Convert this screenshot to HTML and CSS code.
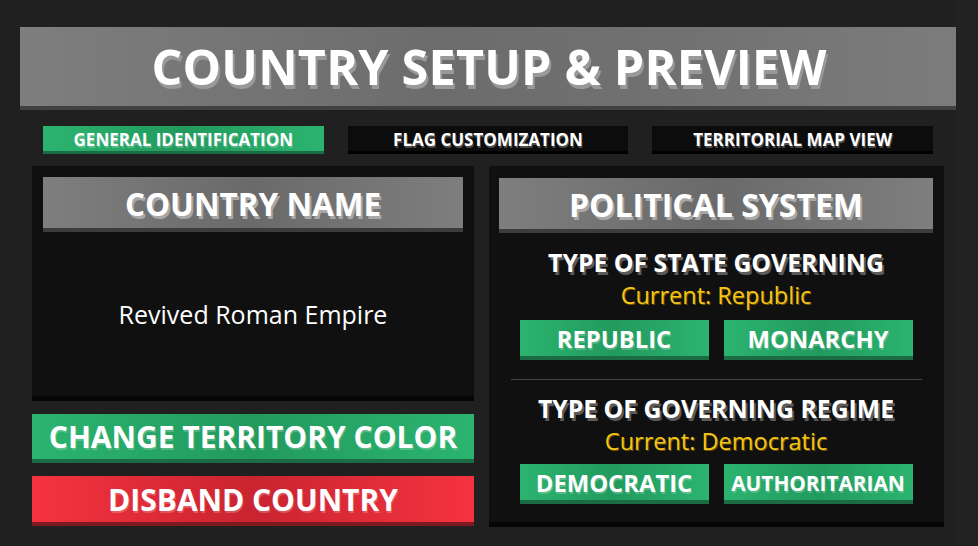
FILE: index.html
```html
<!DOCTYPE html>
<html lang="en">
<head>
<meta charset="utf-8">
<title>Country Setup &amp; Preview</title>
<link rel="stylesheet" href="styles.css">
</head>
<body>
<div class="app">
  <header class="title-bar"><h1>COUNTRY SETUP &amp; PREVIEW</h1></header>
  <nav class="tabs">
    <div class="tab tab-active">GENERAL IDENTIFICATION</div>
    <div class="tab">FLAG CUSTOMIZATION</div>
    <div class="tab">TERRITORIAL MAP VIEW</div>
  </nav>
  <main class="content">
    <div class="left-col">
      <section class="panel name-panel">
        <div class="panel-header">COUNTRY NAME</div>
        <div class="name-value">Revived Roman Empire</div>
      </section>
      <button class="btn btn-green btn-wide">CHANGE TERRITORY COLOR</button>
      <button class="btn btn-red btn-wide btn-tall">DISBAND COUNTRY</button>
    </div>
    <section class="panel political">
      <div class="panel-header">POLITICAL SYSTEM</div>
      <div class="group">
        <h2 class="group-title">TYPE OF STATE GOVERNING</h2>
        <div class="current">Current: Republic</div>
        <div class="choices">
          <button class="btn btn-green btn-choice">REPUBLIC</button>
          <button class="btn btn-green btn-choice">MONARCHY</button>
        </div>
      </div>
      <hr class="divider">
      <div class="group group-second">
        <h2 class="group-title">TYPE OF GOVERNING REGIME</h2>
        <div class="current">Current: Democratic</div>
        <div class="choices">
          <button class="btn btn-green btn-choice">DEMOCRATIC</button>
          <button class="btn btn-green btn-choice btn-small">AUTHORITARIAN</button>
        </div>
      </div>
    </section>
  </main>
</div>
</body>
</html>
```

FILE: styles.css
```css
* { box-sizing: border-box; }
html, body { margin: 0; padding: 0; }
body {
  background: #222222;
  font-family: "Open Sans", "Liberation Sans", sans-serif;
  color: #ffffff;
  width: 978px;
  height: 546px;
  overflow: hidden;
}
.app {
  width: 956px;
  height: 546px;
  background: #202020;
  padding: 27px 0 0 20px;
}
.title-bar {
  width: 936px;
  height: 83px;
  background: linear-gradient(90deg, #7e7e7e 0%, #6c6c6c 45%, #717171 70%, #7c7c7c 100%);
  border-bottom: 4px solid #414141;
  display: flex;
  align-items: center;
  justify-content: center;
}
.title-bar h1 {
  margin: 0;
  font-size: 48.5px;
  font-weight: 700;
  line-height: 1;
  letter-spacing: 0.2px;
  text-shadow: 2px 4px 0 #999999;
  padding-left: 2px;
}
.tabs {
  width: 936px;
  margin-top: 16px;
  padding: 0 23px;
  display: grid;
  grid-template-columns: 1fr 1fr 1fr;
  gap: 24px;
}
.tab {
  height: 28px;
  background: #0c0c0c;
  border-bottom: 3px solid #000000;
  display: flex;
  align-items: center;
  justify-content: center;
  font-size: 17px;
  font-weight: 700;
  text-shadow: 1px 2px 0 #4a4a4a;
  padding-top: 1px;
}
.tab-active {
  background: linear-gradient(90deg, #2bb46f 0%, #229a5e 50%, #2bb46f 100%);
  border-bottom-color: #1b6c45;
  text-shadow: 1px 2px 0 rgba(255,255,255,0.22);
}
.content {
  width: 936px;
  margin-top: 12px;
  padding: 0 12px;
  display: grid;
  grid-template-columns: 442px 455px;
  gap: 15px;
}
.left-col {
  display: flex;
  flex-direction: column;
  gap: 13px;
}
.panel {
  background: #101010;
  border-bottom: 5px solid #050505;
}
.name-panel {
  height: 235px;
  padding: 11px 11px 0;
  display: flex;
  flex-direction: column;
}
.panel-header {
  height: 55px;
  background: linear-gradient(90deg, #7e7e7e 0%, #6a6a6a 50%, #7e7e7e 100%);
  border-bottom: 4px solid #3c3c3c;
  display: flex;
  align-items: center;
  justify-content: center;
  font-size: 31.5px;
  font-weight: 700;
  text-shadow: 2px 3px 0 #a8a8a8;
  padding-top: 2px;
}
.name-value {
  flex: 1;
  display: flex;
  align-items: center;
  justify-content: center;
  font-size: 25px;
}
.btn {
  border: none;
  margin: 0;
  padding: 0;
  font-family: "Open Sans", "Liberation Sans", sans-serif;
  font-weight: 700;
  color: #ffffff;
  display: flex;
  align-items: center;
  justify-content: center;
}
.btn-green {
  background: linear-gradient(90deg, #2bb46f 0%, #229a5e 50%, #2bb46f 100%);
  border-bottom: 4px solid #1b6c45;
  text-shadow: 1px 2px 0 rgba(255,255,255,0.22);
}
.btn-red {
  background: linear-gradient(90deg, #f5333f 0%, #c92430 50%, #f5333f 100%);
  border-bottom: 4px solid #7d1a20;
  text-shadow: 1px 2px 0 rgba(255,255,255,0.22);
}
.btn-wide {
  width: 442px;
  height: 49px;
  font-size: 30px;
}
.btn-tall { height: 50px; }
.political {
  height: 361px;
  padding: 12px 11px 0 10px;
  display: flex;
  flex-direction: column;
  align-items: center;
}
.political .panel-header {
  width: 434px;
  font-size: 32px;
}
.group {
  display: flex;
  flex-direction: column;
  align-items: center;
}
.group-title {
  margin: 12px 0 0;
  font-size: 24.8px;
  line-height: 34px;
  font-weight: 700;
  text-shadow: 2px 3px 0 #5a5a5a;
}
.current {
  color: #f5c518;
  font-size: 23.5px;
  line-height: 32px;
  text-shadow: 1px 1px 0 #6b5200;
}
.choices {
  margin-top: 9px;
  display: flex;
  gap: 15px;
}
.btn-choice {
  width: 189px;
  height: 40px;
  font-size: 23.8px;
  padding-top: 1px;
}
.btn-small { font-size: 20.8px; }
.divider {
  width: 411px;
  border: 0;
  border-top: 1px solid #444444;
  margin: 19px 0 0;
}
.group-second .group-title { margin-top: 11px; }
.group-second .choices { margin-top: 7px; }
```
